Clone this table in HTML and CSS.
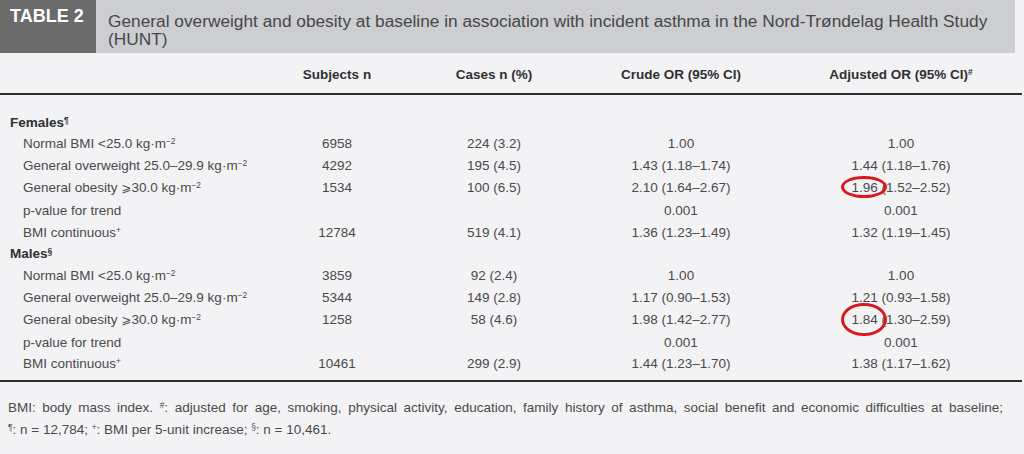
FILE: index.html
```html
<!DOCTYPE html>
<html>
<head>
<meta charset="utf-8">
<link rel="stylesheet" href="styles.css">
</head>
<body>
<div class="caption">
  <div class="caption-label">TABLE 2</div>
  <div class="caption-title">General overweight and obesity at baseline in association with incident asthma in the Nord-Trøndelag Health Study (HUNT)</div>
</div>
<div class="table">
  <div class="row head">
    <div></div>
    <div class="num">Subjects n</div>
    <div class="num">Cases n (%)</div>
    <div class="num">Crude OR (95% CI)</div>
    <div class="num adj">Adjusted OR (95% CI)<sup>#</sup></div>
  </div>
  <div class="body">
    <div class="row"><div class="group">Females<sup>¶</sup></div></div>
    <div class="row"><div class="sub">Normal BMI &lt;25.0 kg·m<sup>−2</sup></div><div class="num">6958</div><div class="num">224 (3.2)</div><div class="num">1.00</div><div class="num adj">1.00</div></div>
    <div class="row"><div class="sub">General overweight 25.0–29.9 kg·m<sup>−2</sup></div><div class="num">4292</div><div class="num">195 (4.5)</div><div class="num">1.43 (1.18–1.74)</div><div class="num adj">1.44 (1.18–1.76)</div></div>
    <div class="row"><div class="sub">General obesity <span class="geq">⩾</span>30.0 kg·m<sup>−2</sup></div><div class="num">1534</div><div class="num">100 (6.5)</div><div class="num">2.10 (1.64–2.67)</div><div class="num adj"><span class="mark mark-a">1.96</span> (1.52–2.52)</div></div>
    <div class="row"><div class="sub">p-value for trend</div><div class="num"></div><div class="num"></div><div class="num">0.001</div><div class="num adj">0.001</div></div>
    <div class="row"><div class="sub">BMI continuous<sup>+</sup></div><div class="num">12784</div><div class="num">519 (4.1)</div><div class="num">1.36 (1.23–1.49)</div><div class="num adj">1.32 (1.19–1.45)</div></div>
    <div class="row"><div class="group">Males<sup>§</sup></div></div>
    <div class="row"><div class="sub">Normal BMI &lt;25.0 kg·m<sup>−2</sup></div><div class="num">3859</div><div class="num">92 (2.4)</div><div class="num">1.00</div><div class="num adj">1.00</div></div>
    <div class="row"><div class="sub">General overweight 25.0–29.9 kg·m<sup>−2</sup></div><div class="num">5344</div><div class="num">149 (2.8)</div><div class="num">1.17 (0.90–1.53)</div><div class="num adj">1.21 (0.93–1.58)</div></div>
    <div class="row"><div class="sub">General obesity <span class="geq">⩾</span>30.0 kg·m<sup>−2</sup></div><div class="num">1258</div><div class="num">58 (4.6)</div><div class="num">1.98 (1.42–2.77)</div><div class="num adj"><span class="mark mark-b">1.84</span> (1.30–2.59)</div></div>
    <div class="row"><div class="sub">p-value for trend</div><div class="num"></div><div class="num"></div><div class="num">0.001</div><div class="num adj">0.001</div></div>
    <div class="row"><div class="sub">BMI continuous<sup>+</sup></div><div class="num">10461</div><div class="num">299 (2.9)</div><div class="num">1.44 (1.23–1.70)</div><div class="num adj">1.38 (1.17–1.62)</div></div>
  </div>
</div>
<p class="notes">BMI: body mass index. <sup>#</sup>: adjusted for age, smoking, physical activity, education, family history of asthma, social benefit and economic difficulties at baseline; <span class="nb"><sup>¶</sup>: n = 12,784;</span> <sup>+</sup>: BMI per 5-unit increase; <sup>§</sup>: n = 10,461.</p>
</body>
</html>
```
FILE: styles.css
```css
html, body {
  margin: 0;
  padding: 0;
}
body {
  width: 1024px;
  height: 454px;
  overflow: hidden;
  background: #f3f3f5;
  font-family: "Liberation Sans", Arial, "DejaVu Sans", sans-serif;
  color: #4a4a4a;
}
.caption {
  display: flex;
  width: 1015px;
  height: 53px;
  background: #cdced2;
}
.caption-label {
  flex: 0 0 96px;
  box-sizing: border-box;
  padding: 7px 0 0 10px;
  background: #6b6b6b;
  color: #ffffff;
  font-weight: bold;
  font-size: 18px;
  line-height: 18px;
}
.caption-title {
  padding: 12px 8px 0 12px;
  font-size: 17.3px;
  line-height: 18px;
  color: #474747;
}
.table {
  width: 1022px;
}
.row {
  display: grid;
  grid-template-columns: 280px 114px 200px 174px 246px;
  font-size: 13.5px;
  line-height: 21.8px;
}
.num {
  text-align: center;
}
.adj {
  padding-left: 20px;
}
.head {
  margin-top: 11px;
  line-height: 22px;
  padding-bottom: 7px;
  border-bottom: 2px solid #2e2e2e;
  font-weight: bold;
  color: #303030;
}
.body {
  padding-top: 16.6px;
  padding-bottom: 4.8px;
  border-bottom: 2px solid #2e2e2e;
}
.group {
  grid-column: 1 / 3;
  padding-left: 10px;
  font-weight: bold;
  color: #2f2f2f;
}
.sub {
  padding-left: 23px;
}
.geq {
  font-family: "DejaVu Sans", sans-serif;
  font-size: 12px;
}
sup {
  font-size: 0.62em;
  line-height: 0;
  vertical-align: 0.5em;
}
.mark {
  position: relative;
}
.mark::after {
  content: "";
  position: absolute;
  box-sizing: border-box;
  border: 3.5px solid #d8181c;
  border-radius: 50%;
}
.mark-a::after {
  left: -10px;
  right: -9px;
  top: -4px;
  bottom: -3px;
}
.mark-b::after {
  left: -10px;
  right: -9px;
  top: -9px;
  bottom: -9px;
}
.notes {
  margin: 15px 0 0;
  padding: 0 21px 0 8px;
  font-size: 13.5px;
  line-height: 22px;
  text-align: justify;
}
.nb {
  white-space: nowrap;
}
```
